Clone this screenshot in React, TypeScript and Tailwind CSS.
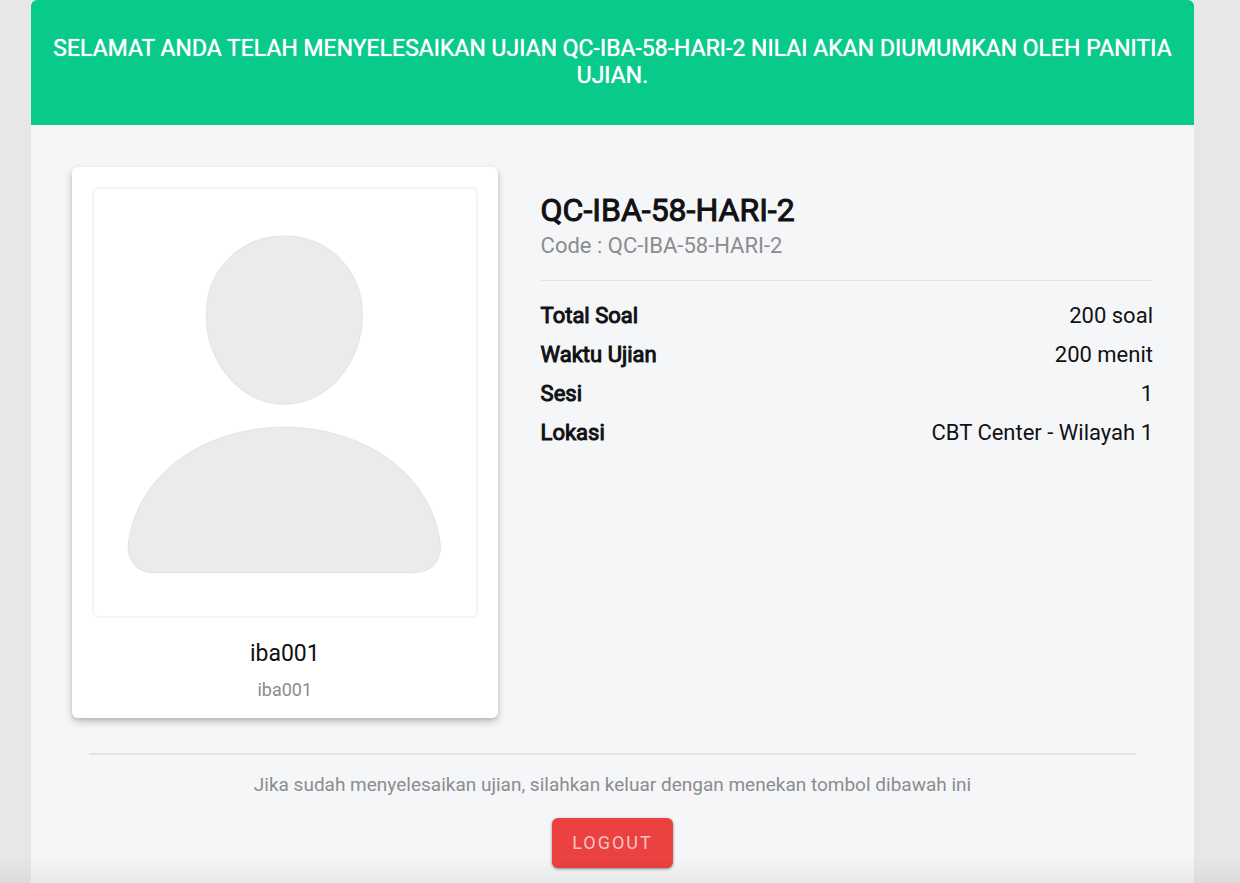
type DetailProps = {
  label: string;
  value: string;
};

const details: DetailProps[] = [
  { label: "Total Soal", value: "200 soal" },
  { label: "Waktu Ujian", value: "200 menit" },
  { label: "Sesi", value: "1" },
  { label: "Lokasi", value: "CBT Center - Wilayah 1" },
];

const Avatar: React.FC = () => (
  <svg viewBox="0 0 385 430" className="block w-full" role="img" aria-label="Foto peserta">
    <g fill="#ebebeb" stroke="#e4e4e4" strokeWidth="1">
      <path d="M192 49C237 49 270 84 270 127C270 176 235 217 192 217C149 217 114 176 114 127C114 84 147 49 192 49Z" />
      <path d="M36 359C42 293 105 240 192 240C279 240 342 293 348 359C348 374 338 385 322 385H60C46 385 36 374 36 359Z" />
    </g>
  </svg>
);

const CardPeserta: React.FC<{ nombre: string; username: string }> = (props) => (
  <div className="rounded-md bg-white px-5 pt-5 pb-4 text-center shadow-[0_4px_8px_rgba(0,0,0,0.18),0_2px_4px_rgba(0,0,0,0.12)]">
    {/* Foto */}
    <div className="rounded-md outline-2 -outline-offset-2 outline-[#f4f4f7]">
      <Avatar />
    </div>
    <p className="mt-5 text-[23px] leading-8 text-[#111114]">{props.nombre}</p>
    <p className="mt-2 text-lg leading-6 text-[#8c8c8f]">{props.username}</p>
  </div>
);

const Detail: React.FC<DetailProps> = (props) => (
  <div className="flex justify-between leading-[39px]">
    <dt className="[-webkit-text-stroke:1px]">{props.label}</dt>
    <dd>{props.value}</dd>
  </div>
);

const App: React.FC = () => {
  return (
    <div className="min-h-screen bg-[#e7e7e7] pr-[46px] pl-[31px] font-[Roboto,sans-serif] text-[#111114]">
      <main className="flex min-h-screen flex-col bg-[#f5f6f8]">
        <header className="rounded-t-md bg-[#07ca8b] px-5 pt-[35px] pb-9 text-center text-[23px] leading-[27px] text-white text-shadow-[0_0_1px_#ffffff]">
          SELAMAT ANDA TELAH MENYELESAIKAN UJIAN QC-IBA-58-HARI-2 NILAI AKAN DIUMUMKAN OLEH PANITIA UJIAN.
        </header>

        {/* Peserta + datos del ujian */}
        <section className="grid grid-cols-[41fr_59fr] gap-x-[43px] px-[41px] pt-[42px]">
          <CardPeserta nombre="iba001" username="iba001" />

          <div className="pt-[23px] text-[22px]">
            <h1 className="text-[32px] leading-10 [-webkit-text-stroke:1px]">QC-IBA-58-HARI-2</h1>
            <p className="leading-8 text-[#8c8c8f]">Code : QC-IBA-58-HARI-2</p>
            <hr className="mt-[18px] mb-[15px] border-[#e2e2e5]" />
            <dl>
              {details.map((item) => (
                <Detail key={item.label} {...item} />
              ))}
            </dl>
          </div>
        </section>

        {/* Footer con logout */}
        <footer className="mt-[35px] flex grow flex-col items-center px-[58px]">
          <hr className="w-full border-t-2 border-[#e4e4e6]" />
          <p className="mt-[18px] text-center text-[19px] leading-6 text-[#8c8c8f]">
            Jika sudah menyelesaikan ujian, silahkan keluar dengan menekan tombol dibawah ini
          </p>
          <button
            type="button"
            className="mt-[21px] h-[50px] rounded-md bg-[#eb4141] px-5 text-lg tracking-[2px] text-[#f9c4c4] shadow-[0_1px_3px_rgba(0,0,0,0.45)] hover:bg-[#dc3636]"
          >
            LOGOUT
          </button>
        </footer>
        <div className="-mt-7 -mr-[46px] -ml-[31px] h-7 bg-linear-to-b from-transparent to-black/5" />
      </main>
    </div>
  );
};

export default App;
